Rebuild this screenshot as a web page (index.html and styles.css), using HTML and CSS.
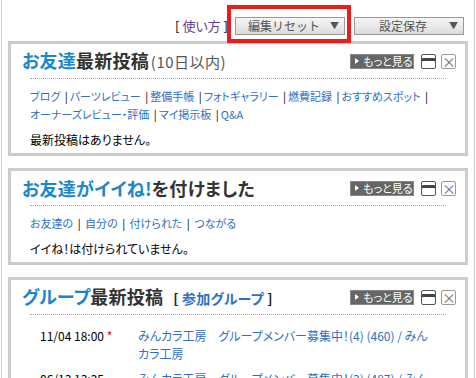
FILE: index.html
```html
<!DOCTYPE html>
<html lang="ja">
<head>
  <meta charset="UTF-8">
  <meta name="viewport" content="width=device-width, initial-scale=1.0">
  <title>マイページ</title>
  <link rel="stylesheet" href="styles.css">
</head>
<body>
  <div class="page">
    <div class="toolbar">
      <span class="help">[ <a href="#">使い方</a> ]</span>
      <span class="mark">
        <button class="tbtn">編集リセット<span class="arrow">▼</span></button>
      </span>
      <button class="tbtn">設定保存<span class="arrow">▼</span></button>
    </div>

    <!-- お友達最新投稿 -->
    <div class="panel">
      <div class="head">
        <h2 class="title"><span class="blue">お友達</span>最新投稿<small>(10日以内)</small></h2>
        <div class="ctrl">
          <a href="#" class="more"><span class="tri"></span>もっと見る</a>
          <span class="ic min"></span>
          <span class="ic close">×</span>
        </div>
      </div>
      <div class="dots"></div>
      <div class="links">
        <a href="#">ブログ</a> <span class="sep">|</span><a href="#">パーツレビュー</a> <span class="sep">|</span><a href="#">整備手帳</a> <span class="sep">|</span><a href="#">フォトギャラリー</a> <span class="sep">|</span><a href="#">燃費記録</a> <span class="sep">|</span><a href="#">おすすめスポット</a> <span class="sep">|</span><br>
        <a href="#">オーナーズレビュー・評価</a> <span class="sep">|</span><a href="#">マイ掲示板</a> <span class="sep">|</span><a href="#">Q&amp;A</a>
      </div>
      <p class="msg">最新投稿はありません。</p>
    </div>

    <!-- イイね -->
    <div class="panel">
      <div class="head">
        <h2 class="title"><span class="blue">お友達がイイね!</span>を付けました</h2>
        <div class="ctrl">
          <a href="#" class="more"><span class="tri"></span>もっと見る</a>
          <span class="ic min"></span>
          <span class="ic close">×</span>
        </div>
      </div>
      <div class="dots"></div>
      <div class="links">
        <a href="#">お友達の</a> <span class="sep">|</span> <a href="#">自分の</a> <span class="sep">|</span> <a href="#">付けられた</a> <span class="sep">|</span> <a href="#">つながる</a>
      </div>
      <p class="msg">イイね！は付けられていません。</p>
    </div>

    <!-- グループ -->
    <div class="panel">
      <div class="head">
        <h2 class="title"><span class="blue">グループ</span>最新投稿<span class="join">[ <a href="#">参加グループ</a> ]</span></h2>
        <div class="ctrl">
          <a href="#" class="more"><span class="tri"></span>もっと見る</a>
          <span class="ic min"></span>
          <span class="ic close">×</span>
        </div>
      </div>
      <div class="dots"></div>
      <div class="posts">
        <div class="date">11/04 18:00 <span class="new">*</span></div>
        <a href="#">みんカラ工房　グループメンバー募集中！(4) (460) / みんカラ工房</a>
        <div class="date">06/13 13:25</div>
        <a href="#">みんカラ工房　グループメンバー募集中！(3) (487) / みんカラ工房</a>
      </div>
    </div>
  </div>
</body>
</html>
```

FILE: styles.css
```css
* {
  margin: 0;
  padding: 0;
  box-sizing: border-box;
}

body, html {
  font-family: "Noto Sans CJK JP", sans-serif;
  font-size: 12px;
  font-feature-settings: "palt";
  color: #000;
  background: #fff;
  overflow: hidden;
}

a {
  color: #2f6fc4;
  text-decoration: none;
}

.page {
  margin-left: 1px;
  width: 474px;
  min-height: 378px;
  border-left: 1px solid #ccc;
  border-right: 1px solid #ccc;
  padding: 0 6px;
}

.toolbar {
  display: flex;
  justify-content: flex-end;
  align-items: center;
  gap: 9px;
  padding: 16px 4px 6px 0;
}

.help {
  font-size: 13px;
  margin-right: -2px;
}

.help a {
  color: #5b3f8f;
}

.mark {
  position: relative;
  display: flex;
}

.mark::after {
  content: "";
  position: absolute;
  left: -8px;
  top: -12px;
  right: -6px;
  bottom: -8px;
  border: 4px solid #ee1b1b;
}

.tbtn {
  position: relative;
  width: 110px;
  height: 18px;
  border: 1px solid #999;
  background: linear-gradient(#f6f6f6, #dcdcdc);
  font-family: inherit;
  font-size: 12px;
  color: #555;
  line-height: 16px;
  padding-right: 12px;
}

.tbtn .arrow {
  position: absolute;
  right: 5px;
  top: 0;
  font-size: 9px;
  color: #555;
}

.panel {
  border: 3px solid #ccc;
  padding: 4px 9px 4px 11px;
  margin-bottom: 12px;
}

.head {
  display: flex;
  align-items: center;
  height: 26px;
}

.title {
  font-size: 18px;
  font-weight: bold;
  color: #333;
  line-height: 26px;
  letter-spacing: 0.2px;
}

.title .blue {
  color: #1b87c9;
}

.title small {
  font-size: 15px;
  font-weight: normal;
  color: #555;
  margin-left: 2px;
  letter-spacing: 0.5px;
}

.join {
  font-size: 14px;
  color: #222;
  margin-left: 10px;
}

.join a {
  color: #2f6fc4;
}

.ctrl {
  margin-left: auto;
  display: flex;
  align-items: center;
}

.more {
  display: flex;
  align-items: center;
  width: 64px;
  height: 15px;
  background: #666;
  border: 1px solid #888;
  color: #fff;
  font-size: 11px;
  line-height: 13px;
  padding-left: 4px;
}

.tri {
  width: 0;
  height: 0;
  border-left: 4px solid #fff;
  border-top: 3px solid transparent;
  border-bottom: 3px solid transparent;
  margin-right: 4px;
}

.ic {
  width: 15px;
  height: 15px;
  border: 1px solid #777;
  border-radius: 2px;
  background: #fff;
}

.min {
  margin-left: 7px;
  border-color: #555;
  box-shadow: inset 0 3px 0 #fff, inset 0 6px 0 #444;
}

.close {
  margin-left: 5px;
  border-color: #999;
  color: #777;
  font-size: 14px;
  line-height: 12px;
  text-align: center;
}

.dots {
  border-bottom: 1px dotted #aaa;
  margin: 4px 10px 0 8px;
}

.links {
  margin: 8px 0 0 8px;
  line-height: 18px;
  font-size: 11px;
}

.sep {
  color: #000;
  margin-left: 2px;
  margin-right: 2px;
}

.msg {
  margin: 8px 0 0 8px;
  line-height: 18px;
}

.posts {
  display: grid;
  grid-template-columns: 98px 298px;
  row-gap: 7px;
  margin: 12px 0 0 18px;
  line-height: 18px;
}

.new {
  color: #e00;
}
```
